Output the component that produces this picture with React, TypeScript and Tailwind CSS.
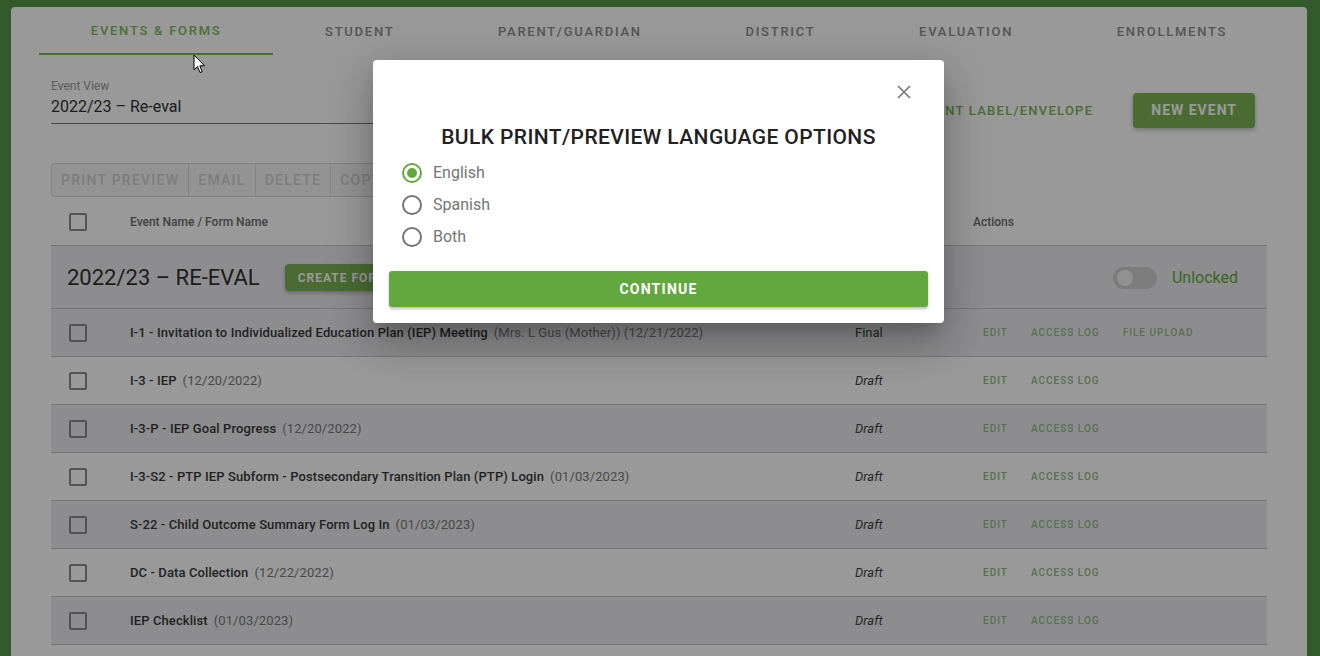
import { useState } from "react";

const tabs = [
   "EVENTS & FORMS",
   "STUDENT",
   "PARENT/GUARDIAN",
   "DISTRICT",
   "EVALUATION",
   "ENROLLMENTS",
];

const rows = [
   {
      name: "I-1 - Invitation to Individualized Education Plan (IEP) Meeting",
      meta: "(Mrs. L Gus (Mother)) (12/21/2022)",
      status: "Final",
      upload: true,
   },
   { name: "I-3 - IEP", meta: "(12/20/2022)", status: "Draft" },
   { name: "I-3-P - IEP Goal Progress", meta: "(12/20/2022)", status: "Draft" },
   {
      name: "I-3-S2 - PTP IEP Subform - Postsecondary Transition Plan (PTP) Login",
      meta: "(01/03/2023)",
      status: "Draft",
   },
   {
      name: "S-22 - Child Outcome Summary Form Log In",
      meta: "(01/03/2023)",
      status: "Draft",
   },
   { name: "DC - Data Collection", meta: "(12/22/2022)", status: "Draft" },
   { name: "IEP Checklist", meta: "(01/03/2023)", status: "Draft" },
];

function Checkbox() {
   return (
      <span className="block h-[18px] w-[18px] rounded-[2px] border-2 border-[#8a8a8a]" />
   );
}

function Radio({ checked }: { checked: boolean }) {
   return (
      <span
         className={`flex h-[20px] w-[20px] items-center justify-center rounded-full border-2 ${
            checked ? "border-[#62a83f]" : "border-[#757575]"
         }`}
      >
         {checked && <span className="h-[10px] w-[10px] rounded-full bg-[#62a83f]" />}
      </span>
   );
}

export default function App() {
   const [lang, setLang] = useState("English");

   return (
      <div className="relative h-[656px] w-full overflow-hidden bg-[#569648] pl-[11px] pr-[13px] pt-[7px] font-['Roboto',sans-serif]">
         <div className="h-[700px] rounded-[4px] bg-white px-[28px]">
            {/* tabs */}
            <div className="flex h-[48px]">
               {tabs.map((t, i) => (
                  <div
                     key={t}
                     className={`flex flex-auto items-center justify-center pt-[2px] text-[13px] font-medium tracking-[1.75px] ${
                        i === 0
                           ? "border-b-2 border-[#7cb455] text-[#80bb5c]"
                           : "text-[#8e8e8e]"
                     }`}
                  >
                     {t}
                  </div>
               ))}
            </div>

            <div className="px-[12px]">
               {/* event view + actions */}
               <div className="flex items-start justify-between pr-[12px] pt-[24px]">
                  <div className="w-[420px] border-b border-[#7a7a7a] pb-[4px]">
                     <div className="text-[12px] leading-[14px] text-[#9a9a9a]">Event View</div>
                     <div className="mt-[2px] text-[16px] leading-[24px] text-[#333]">2022/23 – Re-eval</div>
                  </div>
                  <div className="mt-[14px] flex items-center gap-[40px]">
                     <span className="text-[13px] font-medium tracking-[1.25px] text-[#7cb455]">
                        PRINT LABEL/ENVELOPE
                     </span>
                     <button className="h-[35px] rounded-[4px] bg-[#7cb455] px-[18px] text-[14px] font-bold tracking-[1px] text-white shadow-[0_2px_4px_rgba(0,0,0,0.25)]">
                        NEW EVENT
                     </button>
                  </div>
               </div>

               {/* toolbar */}
               <div className="mt-[35px] flex h-[34px] w-fit rounded-[4px] border border-[#d9d9d9] bg-[#f6f6f6] text-[14px] font-medium tracking-[1.25px] text-[#d0d0d0]">
                  <span className="flex items-center border-r border-[#d9d9d9] px-[9px]">PRINT PREVIEW</span>
                  <span className="flex items-center border-r border-[#d9d9d9] px-[9px]">EMAIL</span>
                  <span className="flex items-center border-r border-[#d9d9d9] px-[9px]">DELETE</span>
                  <span className="flex items-center border-r border-[#d9d9d9] px-[9px]">COPY</span>
                  <span className="flex items-center px-[9px]">MOVE</span>
               </div>

               {/* table header */}
               <div className="grid h-[49px] grid-cols-[79px_725px_118px_1fr] items-center border-b border-[#c9c9c9] pt-[1px] text-[12px] font-medium text-[#6e6e6e]">
                  <div className="pl-[18px]">
                     <Checkbox />
                  </div>
                  <div>Event Name / Form Name</div>
                  <div>Status</div>
                  <div>Actions</div>
               </div>

               {/* group row */}
               <div className="flex h-[63px] items-center border-b border-[#c9c9c9] bg-[#ebecee] pl-[16px] pr-[29px] pt-[1px]">
                  <span className="text-[22px] text-[#333]">2022/23 – RE-EVAL</span>
                  <button className="ml-[25px] h-[27px] rounded-[4px] bg-[#7cb455] px-[13px] text-[12px] font-bold tracking-[1px] text-white shadow-[0_2px_4px_rgba(0,0,0,0.25)]">
                     CREATE FORM
                  </button>
                  <div className="ml-auto flex items-center gap-[15px]">
                     <span className="relative flex h-[22px] w-[44px] items-center rounded-full bg-[#cfcfcf] px-[4px]">
                        <span className="h-[16px] w-[16px] rounded-full bg-[#f2f2f2]" />
                     </span>
                     <span className="text-[16px] text-[#62a83f]">Unlocked</span>
                  </div>
               </div>

               {/* rows */}
               {rows.map((r, i) => (
                  <div
                     key={r.name}
                     className={`grid h-[48px] grid-cols-[79px_725px_118px_1fr] items-center border-b border-[#c9c9c9] text-[13px] ${
                        i % 2 === 0 ? "bg-[#ebecee]" : "bg-white"
                     }`}
                  >
                     <div className="pl-[18px]">
                        <Checkbox />
                     </div>
                     <div className="tracking-[0.1px]">
                        <span className="font-medium text-[#3a3a3a]">{r.name}</span>
                        <span className="ml-[6px] text-[#7a7a7a]">{r.meta}</span>
                     </div>
                     <div className={`font-normal text-[#444] ${r.status === "Draft" ? "italic" : ""}`}>{r.status}</div>
                     <div className="flex gap-[23px] pl-[10px] text-[10px] font-medium tracking-[1px] text-[#96b888]">
                        <span>EDIT</span>
                        <span>ACCESS LOG</span>
                        {r.upload && <span>FILE UPLOAD</span>}
                     </div>
                  </div>
               ))}
            </div>
         </div>

         {/* modal */}
         <div className="absolute inset-0 flex items-start justify-center bg-black/40 pr-[3px] pt-[60px]">
            <div className="w-[571px] rounded-[4px] bg-white px-[16px] pb-[16px] shadow-[0_11px_15px_-7px_rgba(0,0,0,0.2),0_24px_38px_3px_rgba(0,0,0,0.14),0_9px_46px_8px_rgba(0,0,0,0.12)]">
               <div className="flex justify-end pr-[17px] pt-[25px]">
                  <svg width="14" height="14" viewBox="0 0 14 14">
                     <path d="M1 1L13 13M13 1L1 13" stroke="#757575" strokeWidth="1.6" />
                  </svg>
               </div>
               <h2 className="mt-[24px] text-center text-[21px] font-medium leading-[28px] tracking-[0.4px] text-[#212121]">
                  BULK PRINT/PREVIEW LANGUAGE OPTIONS
               </h2>
               <div className="mt-[6px] pl-[13px]">
                  {["English", "Spanish", "Both"].map((l) => (
                     <label
                        key={l}
                        onClick={() => setLang(l)}
                        className="flex h-[32px] cursor-pointer items-center gap-[11px] text-[16px] text-[#757575]"
                     >
                        <Radio checked={lang === l} />
                        {l}
                     </label>
                  ))}
               </div>
               <button className="mt-[18px] h-[36px] w-full rounded-[3px] bg-[#63a83f] text-[14px] font-bold tracking-[1.25px] text-white shadow-[0_2px_3px_rgba(0,0,0,0.25)]">
                  CONTINUE
               </button>
            </div>
         </div>

         {/* mouse pointer */}
         <svg className="absolute left-[193px] top-[54px]" width="13" height="20" viewBox="0 0 13 20">
            <path d="M1 1V16L4.5 12.5L7 18.5L9.2 17.6L6.8 11.8H11.5Z" fill="white" stroke="black" strokeWidth="1" />
         </svg>
      </div>
   );
}
